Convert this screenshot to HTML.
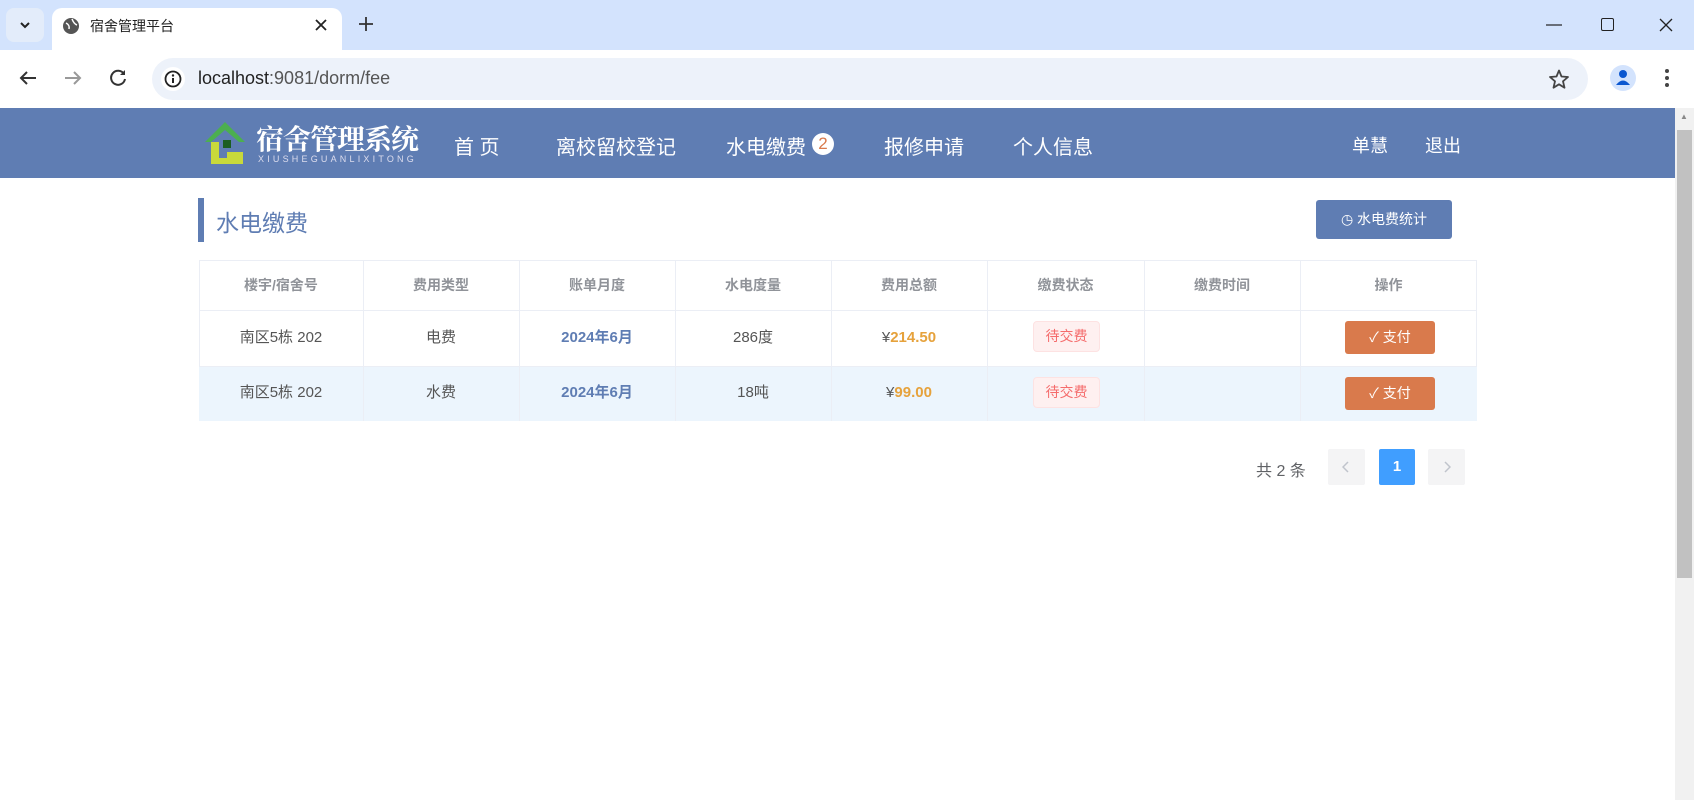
<!DOCTYPE html><html><head><meta charset="utf-8"><style>
*{margin:0;padding:0;box-sizing:border-box}
body{width:1694px;height:800px;overflow:hidden;background:#fff;font-family:"Liberation Sans","Noto Sans CJK SC",sans-serif;position:relative}
.a{position:absolute}
.nav{color:#fff;font-size:20px;top:131px}
.th{top:260px;height:50px;line-height:50px;text-align:center;font-size:14px;font-weight:bold;color:#909399}
.td{height:54px;line-height:54px;text-align:center;font-size:15px;color:#555}
.vl{position:absolute;top:260px;width:1px;height:161px;background:#ebeef5}
.tag{width:67px;height:31px;line-height:29px;border:1px solid #fde2e2;background:#fef0f0;color:#f56c6c;font-size:14px;text-align:center;border-radius:4px}
.pay{width:90px;height:33px;line-height:33px;background:#d97a4c;color:#fff;font-size:14px;text-align:center;border-radius:3px}
.pg{width:37px;height:36px;background:#f4f4f5;border-radius:2px}
</style></head><body>
<div class="a" style="left:0;top:0;width:1694px;height:50px;background:#d3e3fd"></div>
<div class="a" style="left:6px;top:8px;width:38px;height:34px;background:#e3ecfa;border-radius:8px"></div>
<svg class="a" style="left:19px;top:20px" width="12" height="10"><path d="M2 3 L6 7 L10 3" stroke="#222" stroke-width="2" fill="none"/></svg>
<div class="a" style="left:52px;top:8px;width:290px;height:42px;background:#fff;border-radius:10px 10px 0 0"></div>
<svg class="a" style="left:62px;top:17px" width="18" height="18"><circle cx="9" cy="9" r="8" fill="#555"/><path d="M4 6 Q8 8 7 12 M10 2 Q12 7 15 8" stroke="#fff" stroke-width="1.5" fill="none"/></svg>
<div class="a" style="left:90px;top:16px;font-size:14px;color:#222">宿舍管理平台</div>
<svg class="a" style="left:315px;top:19px" width="12" height="12"><path d="M1 1L11 11M11 1L1 11" stroke="#222" stroke-width="1.8"/></svg>
<svg class="a" style="left:359px;top:17px" width="14" height="14"><path d="M7 0V14M0 7H14" stroke="#333" stroke-width="1.8"/></svg>
<svg class="a" style="left:1546px;top:24px" width="16" height="2"><path d="M0 1H16" stroke="#222" stroke-width="1.2"/></svg>
<div class="a" style="left:1601px;top:18px;width:13px;height:13px;border:1.3px solid #222;border-radius:2px"></div>
<svg class="a" style="left:1659px;top:18px" width="14" height="14"><path d="M1 1L13 13M13 1L1 13" stroke="#222" stroke-width="1.3"/></svg>
<div class="a" style="left:0;top:50px;width:1694px;height:58px;background:#fff"></div>
<svg class="a" style="left:19px;top:70px" width="18" height="16"><path d="M17 8H2M8 2L2 8L8 14" stroke="#333" stroke-width="2" fill="none"/></svg>
<svg class="a" style="left:64px;top:70px" width="18" height="16"><path d="M1 8H16M10 2L16 8L10 14" stroke="#999" stroke-width="2" fill="none"/></svg>
<svg class="a" style="left:110px;top:69px" width="18" height="18"><path d="M14 5A7 7 0 1 0 15 10" stroke="#333" stroke-width="2" fill="none"/><path d="M15 1V6H10" fill="#333"/></svg>
<div class="a" style="left:152px;top:58px;width:1436px;height:42px;background:#edf2fa;border-radius:21px"></div>
<div class="a" style="left:161px;top:67px;width:24px;height:24px;background:#fff;border-radius:12px"></div>
<svg class="a" style="left:164px;top:70px" width="18" height="18"><circle cx="9" cy="9" r="7.5" stroke="#222" stroke-width="1.8" fill="none"/><path d="M9 8V13" stroke="#222" stroke-width="2"/><circle cx="9" cy="5.5" r="1.2" fill="#222"/></svg>
<div class="a" style="left:198px;top:68px;font-size:18px;color:#222">localhost<span style="color:#555">:9081/dorm/fee</span></div>
<svg class="a" style="left:1549px;top:69px" width="20" height="20"><path d="M10 1.5L12.5 7.5L19 8L14 12.3L15.5 18.7L10 15.3L4.5 18.7L6 12.3L1 8L7.5 7.5Z" stroke="#444" stroke-width="1.8" fill="none" stroke-linejoin="round"/></svg>
<div class="a" style="left:1610px;top:65px;width:26px;height:26px;border-radius:13px;background:#d3e3fd"></div>
<svg class="a" style="left:1614px;top:68px" width="18" height="20"><circle cx="9" cy="6" r="4" fill="#0b57d0"/><path d="M2 17 Q9 8 16 17Z" fill="#0b57d0"/></svg>
<svg class="a" style="left:1664px;top:68px" width="6" height="20"><circle cx="3" cy="3" r="2" fill="#444"/><circle cx="3" cy="10" r="2" fill="#444"/><circle cx="3" cy="17" r="2" fill="#444"/></svg>
<div class="a" style="left:0;top:108px;width:1675px;height:70px;background:#5f7db3"></div>
<svg class="a" style="left:203px;top:118px" width="50" height="50"><path d="M2 24 L22 4 L42 24 L36 24 L22 12 L8 24Z" fill="#4caf50"/><path d="M8 24 L8 46 L40 46 L40 34 L24 34 L24 40 L16 40 L16 24Z" fill="#c8d93a"/><rect x="20" y="22" width="8" height="8" fill="#1b5e20"/></svg>
<div class="a" style="left:256px;top:118px;font-size:28px;font-weight:bold;color:#fff;font-family:'Noto Serif CJK SC',serif;letter-spacing:-1px">宿舍管理系统</div>
<div class="a" style="left:258px;top:154px;font-size:9px;color:#dde;letter-spacing:3.2px">XIUSHEGUANLIXITONG</div>
<div class="a nav" style="left:454px">首 页</div>
<div class="a nav" style="left:556px">离校留校登记</div>
<div class="a nav" style="left:726px">水电缴费</div>
<div class="a" style="left:812px;top:133px;width:22px;height:22px;border-radius:11px;background:#fff;color:#d97a4c;text-align:center;line-height:22px;font-size:17px">2</div>
<div class="a nav" style="left:884px">报修申请</div>
<div class="a nav" style="left:1013px">个人信息</div>
<div class="a nav" style="left:1352px;font-size:18px;top:132px">单慧</div>
<div class="a nav" style="left:1425px;font-size:18px;top:132px">退出</div>
<div class="a" style="left:1675px;top:108px;width:19px;height:692px;background:#f1f1f1"></div>
<div class="a" style="left:1677px;top:130px;width:15px;height:448px;background:#c1c1c1"></div>
<div class="a" style="left:1680px;top:112px;font-size:8px;color:#888">▲</div>
<div class="a" style="left:198px;top:198px;width:6px;height:44px;background:#5f7db3"></div>
<div class="a" style="left:216px;top:204px;font-size:23px;color:#5f7db3">水电缴费</div>
<div class="a" style="left:1316px;top:200px;width:136px;height:39px;background:#5f7db3;border-radius:3px;color:#fff;font-size:14px;line-height:39px;text-align:center">◷ 水电费统计</div>
<div class="a" style="left:199px;top:260px;width:1278px;height:161px;border:1px solid #ebeef5"></div>
<div class="a" style="left:199px;top:310px;width:1278px;height:1px;background:#ebeef5"></div>
<div class="a" style="left:199px;top:366px;width:1278px;height:55px;background:#ecf5fd;border-top:1px solid #ebeef5"></div>
<div class="vl" style="left:363px"></div><div class="vl" style="left:519px"></div><div class="vl" style="left:675px"></div><div class="vl" style="left:831px"></div><div class="vl" style="left:987px"></div><div class="vl" style="left:1144px"></div><div class="vl" style="left:1300px"></div>
<div class="a th" style="left:199px;width:164px">楼宇/宿舍号</div>
<div class="a th" style="left:363px;width:156px">费用类型</div>
<div class="a th" style="left:519px;width:156px">账单月度</div>
<div class="a th" style="left:675px;width:156px">水电度量</div>
<div class="a th" style="left:831px;width:156px">费用总额</div>
<div class="a th" style="left:987px;width:157px">缴费状态</div>
<div class="a th" style="left:1144px;width:156px">缴费时间</div>
<div class="a th" style="left:1300px;width:177px">操作</div>
<div class="a td" style="left:199px;top:311px;width:164px">南区5栋 202</div>
<div class="a td" style="left:363px;top:311px;width:156px">电费</div>
<div class="a td" style="left:519px;top:311px;width:156px;color:#5f7db3;font-weight:bold">2024年6月</div>
<div class="a td" style="left:675px;top:311px;width:156px">286度</div>
<div class="a td" style="left:831px;top:311px;width:156px">¥<b style="color:#e6a23c">214.50</b></div>
<div class="a tag" style="left:1033px;top:321px">待交费</div>
<div class="a pay" style="left:1345px;top:321px">✓ 支付</div>
<div class="a td" style="left:199px;top:366px;width:164px">南区5栋 202</div>
<div class="a td" style="left:363px;top:366px;width:156px">水费</div>
<div class="a td" style="left:519px;top:366px;width:156px;color:#5f7db3;font-weight:bold">2024年6月</div>
<div class="a td" style="left:675px;top:366px;width:156px">18吨</div>
<div class="a td" style="left:831px;top:366px;width:156px">¥<b style="color:#e6a23c">99.00</b></div>
<div class="a tag" style="left:1033px;top:377px">待交费</div>
<div class="a pay" style="left:1345px;top:377px">✓ 支付</div>
<div class="a" style="left:1256px;top:457px;font-size:16px;color:#606266">共 2 条</div>
<div class="a pg" style="left:1328px;top:449px"></div>
<svg class="a" style="left:1342px;top:461px" width="8" height="12"><path d="M6 1L1 6L6 11" stroke="#c0c4cc" stroke-width="1.5" fill="none"/></svg>
<div class="a" style="left:1379px;top:449px;width:36px;height:36px;background:#409eff;color:#fff;text-align:center;line-height:36px;font-weight:bold;font-size:15px;border-radius:2px">1</div>
<div class="a pg" style="left:1428px;top:449px"></div>
<svg class="a" style="left:1443px;top:461px" width="8" height="12"><path d="M2 1L7 6L2 11" stroke="#c0c4cc" stroke-width="1.5" fill="none"/></svg>
</body></html>
